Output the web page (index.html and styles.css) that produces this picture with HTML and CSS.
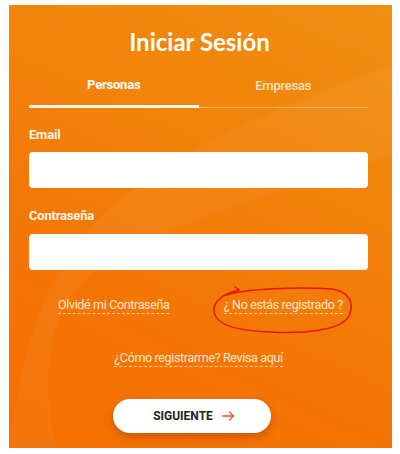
FILE: index.html
```html
<!DOCTYPE html>
<html lang="es">
<head>
<meta charset="utf-8">
<title>Iniciar Sesión</title>
<link rel="stylesheet" href="styles.css">
</head>
<body>
<div class="panel">
  <svg class="wave" width="383" height="443" viewBox="0 0 383 443" aria-hidden="true">
    <path d="M0 443 L48 443 C36 400 32 330 66 286 C100 240 210 205 383 150 L383 60 C250 110 120 160 60 250 C20 310 10 380 0 443 Z" fill="#ffffff" fill-opacity="0.045"/>
  </svg>
  <div class="content">
    <h1 class="title">Iniciar Sesión</h1>
    <div class="tabs">
      <div class="tab active">Personas</div>
      <div class="tab">Empresas</div>
    </div>
    <label class="label">Email</label>
    <div class="input"></div>
    <label class="label label-pass">Contraseña</label>
    <div class="input input-pass"></div>
    <div class="links">
      <div class="half"><a class="link">Olvidé mi Contraseña</a></div>
      <div class="half"><a class="link">¿ No estás registrado ?</a></div>
    </div>
    <div class="center-row"><a class="link">¿Cómo registrarme? Revisa aquí</a></div>
    <div class="btn-row">
      <button class="btn">SIGUIENTE
        <svg class="arrow" width="13" height="10" viewBox="0 0 13 10"><path d="M0.5 5 H11.5 M7.5 1 L11.5 5 L7.5 9" fill="none" stroke="#f0542a" stroke-width="1.3" stroke-linecap="round" stroke-linejoin="round"/></svg>
      </button>
    </div>
  </div>
  <svg class="scribble" width="146" height="54" viewBox="0 0 146 54" aria-hidden="true">
    <path d="M14 11 C34 3 95 2 122 4 C140 6 146 18 140 31 C133 45 95 49 62 47 C30 46 7 41 5 27 C4 16 14 9 30 5 L26 2" fill="none" stroke="#e8141a" stroke-width="1.5" stroke-linecap="round" stroke-linejoin="round"/>
  </svg>
</div>
</body>
</html>
```

FILE: styles.css
```css
* { box-sizing: border-box; }
html, body { margin: 0; padding: 0; background: #ffffff; }
body { font-family: Roboto, "Open Sans", Arial, sans-serif; }

.panel {
  position: relative;
  margin: 5px 0 0 9px;
  width: 383px;
  height: 443px;
  background: linear-gradient(205deg, #ef8f12 0%, #f2820a 35%, #f47505 70%, #f56f00 100%);
  overflow: hidden;
}

.wave { position: absolute; left: 0; top: 0; }

.content {
  position: relative;
  padding: 23px 24px 0 20px;
  display: flex;
  flex-direction: column;
}

.title {
  margin: 0;
  font-family: Lato, Roboto, sans-serif;
  font-size: 24px;
  line-height: 28px;
  font-weight: 700;
  color: #ffffff;
  text-align: center;
  padding-left: 2px;
}

.tabs {
  margin-top: 21px;
  display: flex;
  align-items: flex-end;
}
.tab {
  flex: 1;
  text-align: center;
  font-size: 13px;
  line-height: 16px;
  font-weight: 500;
  letter-spacing: -0.2px;
  color: #fde2c2;
  padding-bottom: 13px;
  border-bottom: 1px solid rgba(255, 240, 220, 0.45);
}
.tab.active {
  color: #ffffff;
  font-weight: 700;
  padding-bottom: 12px;
  border-bottom: 3px solid #fff8f0;
}

.label {
  display: block;
  margin-top: 19px;
  font-size: 13px;
  line-height: 16px;
  font-weight: 700;
  letter-spacing: -0.2px;
  color: #fff3e6;
}
.label-pass { margin-top: 20px; }

.input {
  margin-top: 9px;
  height: 36px;
  background: #ffffff;
  border-radius: 4px;
}
.input-pass { margin-top: 10px; }

.links {
  margin-top: 27px;
  display: flex;
}
.half {
  flex: 1;
  display: flex;
  justify-content: center;
}
.link {
  font-size: 12.5px;
  line-height: 16px;
  letter-spacing: -0.35px;
  color: #fde7cf;
  border-bottom: 1px dashed rgba(255, 236, 215, 0.75);
  cursor: pointer;
}

.center-row {
  margin-top: 36px;
  display: flex;
  justify-content: center;
}

.btn-row {
  margin-top: 32px;
  display: flex;
  padding-left: 84px;
}
.btn {
  width: 158px;
  height: 34px;
  border: none;
  border-radius: 17px;
  background: #ffffff;
  box-shadow: 0 4px 9px rgba(120, 50, 0, 0.35);
  font-family: Roboto, Arial, sans-serif;
  font-size: 12px;
  font-weight: 700;
  color: #222222;
  letter-spacing: 0;
  display: flex;
  align-items: center;
  justify-content: center;
  gap: 9px;
  padding: 0 0 0 4px;
}

.scribble {
  position: absolute;
  left: 200px;
  top: 280px;
}
```
